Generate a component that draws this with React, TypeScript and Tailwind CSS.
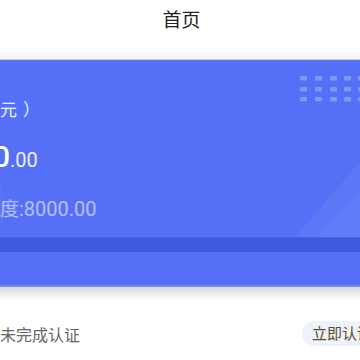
import React from "react";

export default function App() {
  const cjk = { fontFamily: '"Noto Sans CJK SC", "Noto Sans", sans-serif' };
  const num = { fontFamily: 'Roboto, "Noto Sans CJK SC", sans-serif' };
  const dotsX = [300, 315, 330, 344, 358];
  const dotsY = [76, 87, 97];
  return (
    <div className="w-[360px] h-[360px] overflow-hidden bg-white relative" style={cjk}>
      <div className="h-[59px] bg-white flex justify-center relative">
        <div className="mt-[5px] ml-[3px] text-[19px] leading-[28px] text-[#222]">首页</div>
        <div className="absolute left-0 right-0 bottom-0 h-[10px] bg-gradient-to-b from-white to-[#f1f1f1]" />
      </div>
      <div className="h-px bg-[#c9cde0]" />
      <div className="relative h-[227px] bg-[#5570f6] overflow-hidden">
        <svg className="absolute left-0 top-0" width="360" height="227" viewBox="0 60 360 227">
          {dotsY.map((y) =>
            dotsX.map((x) => (
              <rect key={`${x}-${y}`} x={x} y={y} width="7" height="4.5" rx="1" fill="#ffffff" fillOpacity="0.28" />
            ))
          )}
          <polygon points="295,237 360,162 360,237" fill="#ffffff" fillOpacity="0.05" />
          <polygon points="318,237 360,190 360,237" fill="#ffffff" fillOpacity="0.03" />
          <circle cx="-30" cy="205" r="36" fill="#ffffff" fillOpacity="0.04" />
          <rect x="0" y="237" width="360" height="15" fill="#3f59dc" />
          <rect x="0" y="237" width="360" height="1" fill="#4b63e6" />
          <rect x="0" y="285" width="360" height="2" fill="#8a9af0" fillOpacity="0.6" />
        </svg>
        <div className="relative pt-[38px] flex flex-col">
          <div className="text-[17px] leading-[22px] text-white/90 flex gap-[6px]">
            <span>元</span>
            <span>）</span>
          </div>
          <div className="mt-[20px] flex items-baseline text-white" style={num}>
            <span className="ml-[-7px] text-[30px] leading-[34px] font-medium">0</span>
            <span className="text-[20px] leading-[24px] text-white/90">.00</span>
          </div>
          <div className="mt-[22px] text-[20px] leading-[24px] text-white/55 flex items-baseline">
            <span className="text-[19px]">度</span>
            <span style={num}>:8000.00</span>
          </div>
        </div>
      </div>
      <div className="h-[14px] bg-gradient-to-b from-[#dcdcdc] to-white" />
      <div className="flex items-center justify-between mt-[20px] h-[25px]">
        <div className="text-[16px] text-[#666] leading-[22px]">未完成认证</div>
        <div className="mr-[-22px] h-[25px] px-[10px] rounded-full bg-[#eef2fb] flex items-center text-[15px] text-[#5b4a24] whitespace-nowrap">
          立即认证
        </div>
      </div>
    </div>
  );
}
